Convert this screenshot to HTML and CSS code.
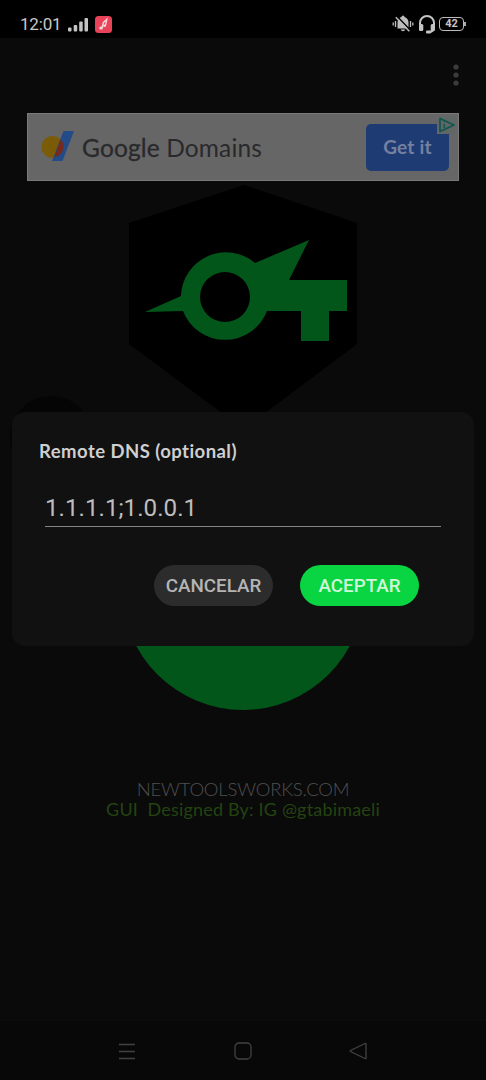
FILE: index.html
```
<!DOCTYPE html>
<html lang="es">
<head>
<meta charset="utf-8">
<meta name="viewport" content="width=device-width">
<title>Remote DNS</title>
<link rel="stylesheet" href="styles.css">
</head>
<body>
<div class="phone">
  <header class="status">
    <div class="status-left">
      <span class="clock">12:01</span>
      <svg class="signal" width="21" height="15" viewBox="0 0 21 15"><g fill="#c4c4c4"><rect x="0" y="10.5" width="3.5" height="4" rx="1"/><rect x="5.7" y="8" width="3.5" height="6.500" rx="1"/><rect x="11.2" y="4.500" width="3.500" height="10" rx="1"/><rect x="16.500" y="1" width="3.500" height="13.500" rx="1"/></g></svg>
      <svg class="music" width="17" height="17" viewBox="0 0 17 17"><rect width="17" height="17" rx="3.500" fill="#e94359"/><path d="M7 12L8.500 6.500 11.700 3.500 10.500 9.500" fill="none" stroke="#f7d4d8" stroke-width="1.400"/><ellipse cx="6" cy="12" rx="1.900" ry="1.500" fill="#f7d4d8"/><ellipse cx="9.500" cy="9.700" rx="1.500" ry="1.200" fill="#f7d4d8"/></svg>
    </div>
    <div class="status-right">
      <svg width="22" height="18" viewBox="0 0 22 18"><path d="M5.500 13.500V7.500C5.500 4.200 7.500 2.300 9.500 1.900a1.500 1.500 0 0 1 3 0c2.400.6 4 2.700 4 5.600v6zM8.800 14.500h4.400c-.4 2.300-4 2.300-4.400 0z" fill="#bdbdbd"/><path d="M3.500 6v6M1.200 7.500v3M18.500 6v6M20.800 7.500v3" stroke="#bdbdbd" stroke-width="1.300"/><path d="M5.200 1.500l13.500 14" stroke="#000" stroke-width="1.500"/><path d="M3.800 2.300l13.500 14" stroke="#bdbdbd" stroke-width="1.500"/></svg>
      <svg class="headset" width="18" height="19" viewBox="0 0 18 19"><path d="M2 10V8a7 7 0 0 1 14 0v4c0 3-1.800 5-5.500 5" fill="none" stroke="#c4c4c4" stroke-width="2"/><rect x="1" y="9" width="4.300" height="7" rx="1.500" fill="#c4c4c4"/><rect x="12.700" y="9" width="4.300" height="7" rx="1.500" fill="#c4c4c4"/><rect x="8" y="15.500" width="5" height="3" rx="1" fill="#c4c4c4"/></svg>
      <span class="battery">42</span>
    </div>
  </header>

  <main class="app">
    <div class="toolbar">
      <svg width="8" height="24" viewBox="0 0 8 24"><g fill="#3c3c3c"><circle cx="4" cy="4" r="2.600"/><circle cx="4" cy="12" r="2.600"/><circle cx="4" cy="20" r="2.600"/></g></svg>
    </div>
    <section class="ad">
      <svg class="ad-logo" width="33" height="32" viewBox="0 0 33 32"><circle cx="11.500" cy="17" r="11" fill="#7a5b08"/><path d="M22.500 1H33L21.500 31H11z" fill="#224b88"/><path d="M19.700 9.400A11 11 0 0 1 22 20a11 11 0 0 1-8.800 7z" fill="#762a1d"/></svg>
      <span class="ad-name"><b>Google</b> Domains</span>
      <span class="ad-button">Get it</span>
      <svg class="ad-choice" width="19" height="18" viewBox="0 0 19 18"><path d="M0 0H19V18H0z" fill="#606766"/><path d="M3 2.500L17 9 3 15.500z" fill="none" stroke="#12554f" stroke-width="1.700" stroke-linejoin="round"/><path d="M7.300 8v4M7.300 5.500v1" stroke="#12554f" stroke-width="1.500"/></svg>
    </section>
    <svg class="emblem" width="230" height="231" viewBox="0 0 230 231">
      <path d="M116 3L229 41V162L137 231H94L1 162V41z" fill="#000"/>
      <path fill="#035619" fill-rule="evenodd" d="M17 130L53 114A45 45 0 0 1 127 81L181 58 161 98H219V129H201V159H173V129H139A45 45 0 0 1 55 129zM97 90a25 25 0 1 0 0 50a25 25 0 1 0 0-50z"/>
    </svg>
    <div class="controls">
      <div class="side-button"></div>
      <div class="connect"></div>
    </div>
    <footer class="credits">
      <div class="site">NEWTOOLSWORKS.COM</div>
      <div class="author">GUI&nbsp; Designed By: IG @gtabimaeli</div>
    </footer>
  </main>

  <nav class="navbar">
    <svg width="18" height="18" viewBox="0 0 18 18"><path d="M1 2.500h16M1 9.500h16M1 16.500h16"/></svg>
    <svg width="18" height="18" viewBox="0 0 18 18"><rect x="1" y="1" width="16" height="16" rx="4"/></svg>
    <svg width="18" height="18" viewBox="0 0 18 18"><path d="M16 1.500q1-.5 1 .5v14q0 1-1 .5L1.500 9.500q-.7-.5 0-1z"/></svg>
  </nav>

  <section class="dialog">
    <h1 class="dialog-title">Remote DNS (optional)</h1>
    <div class="field">1.1.1.1;1.0.0.1</div>
    <div class="actions">
      <button class="button">CANCELAR</button>
      <button class="button button-accept">ACEPTAR</button>
    </div>
  </section>
</div>
</body>
</html>
```
FILE: styles.css
```
* { box-sizing: border-box; }
body { margin: 0; background: #0a0a0a; }
svg { display: block; flex: none; }
.phone {
  position: relative;
  display: flex;
  flex-direction: column;
  width: 486px;
  height: 1080px;
  overflow: hidden;
  background: #0a0a0a;
  font-family: Roboto, "Liberation Sans", sans-serif;
}
.status {
  display: flex;
  justify-content: space-between;
  align-items: center;
  height: 38px;
  padding: 10px 22px 0 20px;
  background: #000;
}
.status-left, .status-right { display: flex; align-items: center; }
.clock { color: #c8c8c8; font-size: 17px; letter-spacing: -.2px; white-space: nowrap; }
.signal { margin-left: 7px; }
.music { margin-left: 6px; }
.headset { margin: 0 3px 0 4px; }
.battery {
  position: relative;
  width: 25px;
  height: 14px;
  border: 1.500px solid #bbb;
  border-radius: 4px;
  color: #c4c4c4;
  font-size: 11px;
  font-weight: 700;
  line-height: 12px;
  text-align: center;
}
.battery::after {
  content: "";
  position: absolute;
  top: 4px;
  right: -3px;
  width: 2px;
  height: 4px;
  background: #aaa;
}
.app {
  display: flex;
  flex: 1;
  flex-direction: column;
  align-items: center;
}
.toolbar {
  display: flex;
  justify-content: flex-end;
  align-self: stretch;
  height: 75px;
  padding: 25px 26px 0 0;
}
.ad {
  position: relative;
  display: flex;
  align-items: center;
  width: 432px;
  height: 68px;
  padding: 0 9px 0 13px;
  border: 1px solid #7a7a7a;
  background: #666;
}
.ad-logo { margin-top: -3px; }
.ad-name {
  margin-left: 8px;
  color: #29292c;
  font: 24.500px Lato, sans-serif;
  letter-spacing: .14px;
  white-space: nowrap;
}
.ad-name b { font-weight: 400; -webkit-text-stroke: .3px #29292c; }
.ad-button {
  width: 83px;
  height: 47px;
  margin-left: auto;
  border-radius: 5px;
  background: #1f3b74;
  color: #7580a0;
  font: 700 19px/46px Lato, sans-serif;
  letter-spacing: .2px;
  text-align: center;
}
.ad-choice { position: absolute; top: 2px; right: 2px; }
.emblem { margin-top: 1px; }
.controls { position: relative; width: 100%; height: 297px; }
.side-button {
  position: absolute;
  top: -17px;
  left: 10px;
  width: 82px;
  height: 82px;
  border-radius: 50%;
  background: #050505;
}
.connect {
  position: absolute;
  bottom: 0;
  left: 122px;
  width: 242px;
  height: 242px;
  border-radius: 50%;
  background: #035619;
}
.credits {
  margin-top: 69px;
  font-family: Lato, sans-serif;
  font-weight: 300;
  line-height: 20px;
  text-align: center;
  white-space: nowrap;
}
.site { color: #505050; font-size: 18.500px; letter-spacing: -.18px; }
.author { color: #234411; font-size: 18px; font-weight: 400; letter-spacing: .18px; }
.navbar {
  display: flex;
  justify-content: space-between;
  align-items: center;
  height: 60px;
  padding: 0 119px 0 118px;
  border-top: 1px solid #0d0d0d;
  background: #080808;
  fill: none;
  stroke: #424242;
  stroke-width: 1.300;
}
.dialog {
  position: absolute;
  top: 412px;
  left: 12px;
  width: 462px;
  height: 234px;
  padding: 25px 33px 0;
  border-radius: 13px;
  background: #111;
}
.dialog-title {
  margin: 0 0 0 -6px;
  color: #cfcfcf;
  font: 700 18.500px/28px Lato, sans-serif;
  letter-spacing: .45px;
  white-space: nowrap;
}
.field {
  height: 49px;
  margin-top: 13px;
  border-bottom: 1.500px solid #858585;
  color: #bdbdbd;
  font-size: 24.200px;
  line-height: 60px;
}
.actions {
  display: flex;
  justify-content: flex-end;
  gap: 27px;
  margin-top: 38px;
  padding-right: 22px;
}
.button {
  width: 119px;
  height: 41px;
  padding: 0;
  border: 0;
  border-radius: 21px;
  background: #2c2c2c;
  color: #b5b5b5;
  font: 500 18.800px Roboto, sans-serif;
}
.button-accept { background: #08d541; color: #d0f7d8; }
```
